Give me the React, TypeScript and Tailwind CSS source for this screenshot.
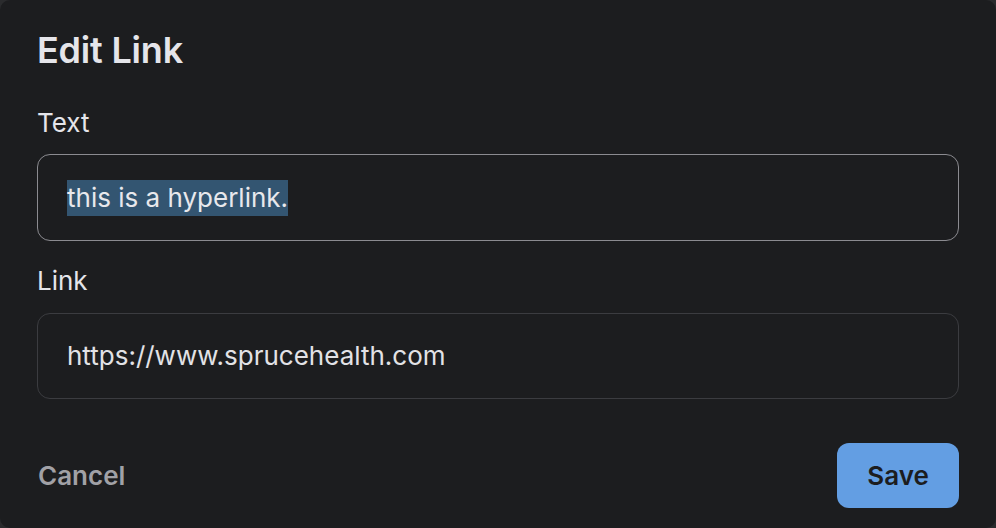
export default function App() {
  return (
    <div className="w-[996px] h-[528px] bg-[#2a2b2d]">
      <div
        className="w-full h-full bg-[#1c1d1f] rounded-[10px] px-[37px] pt-[29px] flex flex-col text-[#e5e5ea]"
        style={{ fontFamily: 'Inter, "Noto Sans", sans-serif' }}
      >
        <h1 className="text-[36px] leading-[43px] font-semibold tracking-[-0.2px]">Edit Link</h1>

        <label className="mt-[36px] text-[26px] leading-[30px]">Text</label>
        <div className="mt-[16px] h-[87px] rounded-[13px] border border-[#8b8b90] flex items-center px-[29px]">
          <span className="bg-[#335571] text-[26px] leading-[36px] text-[#e8e8ec]">this is a hyperlink.</span>
        </div>

        <label className="mt-[25px] text-[26px] leading-[30px]">Link</label>
        <div className="mt-[17px] h-[86px] rounded-[13px] border border-[#3b3c40] flex items-center px-[29px]">
          <span className="text-[26px] leading-[36px] text-[#e2e2e6]">https://www.sprucehealth.com</span>
        </div>

        <div className="mt-[44px] flex items-center justify-between">
          <button className="text-[26px] font-semibold text-[#a1a1a6] pl-px">Cancel</button>
          <button className="w-[122px] h-[65px] rounded-[12px] bg-[#639ee3] text-[26px] font-semibold text-[#1c1d1f]">
            Save
          </button>
        </div>
      </div>
    </div>
  );
}
